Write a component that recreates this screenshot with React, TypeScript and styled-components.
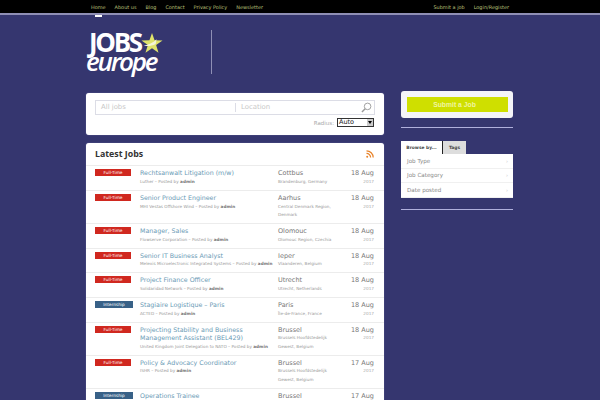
import React from "react"
import styled, { createGlobalStyle } from "styled-components"

const GlobalStyle = createGlobalStyle`
  html, body {
    margin: 0;
    background: #35366f;
    font-family: "DejaVu Sans", sans-serif;
  }
`

const Page = styled.div`
  height: 400px;
  overflow: hidden;
`

const TopBar = styled.div`
  height: 13px;
  background: #000;
  border-bottom: 2px solid #8f8fb5;
  display: flex;
  justify-content: space-between;
  padding: 0 91px;
  position: relative;
`

const NavList = styled.div`
  display: flex;
  gap: 9px;
  align-items: center;
  height: 13px;
  font-size: 4.95px;
  color: #bcc07a;
`

const ActiveMark = styled.div`
  position: absolute;
  left: 95px;
  top: 15px;
  width: 7px;
  height: 2px;
  background: #fff;
`

const Header = styled.div`
  height: 78px;
  padding-left: 86px;
  display: flex;
  box-sizing: border-box;
  padding-top: 16px;
`

const Logo = styled.div`
  width: 125px;
  height: 42px;
  position: relative;
  color: #fff;
  font-family: "Open Sans", sans-serif;
`

const LogoJobs = styled.div`
  font-size: 26px;
  font-weight: 700;
  height: 20px;
  line-height: 20px;
  letter-spacing: -2.3px;
  margin-left: 3px;
  margin-top: 1px;
`

const LogoEurope = styled.div`
  font-size: 26px;
  font-weight: 600;
  font-style: italic;
  height: 20px;
  line-height: 18px;
  letter-spacing: -2.2px;
`

const LogoStar = styled.svg`
  position: absolute;
  left: 55px;
  top: 1px;
  width: 22px;
  height: 22px;
`

const Divider = styled.div`
  width: 1px;
  height: 44px;
  margin-top: -1px;
  background: #8f8fb5;
`

const Columns = styled.div`
  display: flex;
  padding-left: 86px;
  gap: 17px;
  align-items: flex-start;
`

const MainColumn = styled.div`
  width: 298px;
  display: flex;
  flex-direction: column;
  gap: 8px;
`

const SideColumn = styled.div`
  width: 112px;
  margin-top: -2px;
  display: flex;
  flex-direction: column;
`

const SearchCard = styled.div`
  height: 42px;
  background: #fff;
  border-radius: 3px;
  box-shadow: 0 0 1px #9a9ac4;
  box-sizing: border-box;
  padding: 7px 9px;
`

const SearchBox = styled.div`
  height: 15px;
  border: 1px solid #dcdde6;
  box-sizing: border-box;
  display: flex;
  align-items: center;
  position: relative;
  font-size: 6.9px;
  color: #c8c8c8;
`

const SearchField = styled.div<{ $width: number }>`
  width: ${({ $width }) => $width}px;
  padding-left: 5px;
  box-sizing: border-box;
  line-height: 9px;
`

const FieldSplit = styled.div`
  width: 1px;
  height: 9px;
  background: #dcdde6;
`

const SearchIcon = styled.svg`
  position: absolute;
  right: 2px;
  top: 1px;
  width: 11px;
  height: 11px;
`

const RadiusRow = styled.div`
  display: flex;
  justify-content: flex-end;
  align-items: center;
  gap: 3px;
  margin-top: 3px;
  padding-right: 1px;
  font-size: 5.5px;
  color: #aaa;
`

const RadiusSelect = styled.div`
  width: 37px;
  height: 9px;
  box-sizing: border-box;
  border: 1px solid #333;
  color: #222;
  font-size: 6.5px;
  line-height: 7px;
  padding-left: 1px;
  position: relative;
`

const SelectArrow = styled.div`
  position: absolute;
  right: 0;
  top: 0;
  width: 6px;
  height: 7px;
  background: #ccc;
  display: flex;
  align-items: center;
  justify-content: center;
  &::after {
    content: "";
    border-left: 2px solid transparent;
    border-right: 2px solid transparent;
    border-top: 3px solid #000;
  }
`

const JobsCard = styled.div`
  background: #fff;
  border-radius: 3px 3px 0 0;
  box-shadow: 0 0 1px #9a9ac4;
`

const JobsHeader = styled.div`
  height: 22px;
  display: flex;
  justify-content: space-between;
  align-items: center;
  padding: 0 10px 0 9px;
`

const JobsTitle = styled.div`
  font-size: 8.8px;
  font-weight: bold;
  color: #333;
  font-family: "Open Sans", sans-serif;
`

const FeedIcon = styled.svg`
  width: 8px;
  height: 8px;
`

const Row = styled.div<{ $height: number }>`
  height: ${({ $height }) => $height}px;
  box-sizing: border-box;
  border-top: 1px solid #ececec;
  display: flex;
  padding: 3px 10px 0 9px;
`

const BadgeCell = styled.div`
  width: 45px;
  flex: none;
`

const Badge = styled.div<{ $kind: string }>`
  width: ${({ $kind }) => ($kind === "Internship" ? 38 : 36)}px;
  height: 7px;
  background: ${({ $kind }) => ($kind === "Internship" ? "#386187" : "#d0281f")};
  color: #fff;
  font-size: 4.3px;
  line-height: 7px;
  text-align: center;
`

const TitleCell = styled.div`
  width: 138px;
  flex: none;
  padding-right: 6px;
  box-sizing: border-box;
`

const JobName = styled.div`
  font-size: 6.3px;
  line-height: 8.7px;
  color: #6a9ab5;
`

const Small = styled.div`
  font-size: 4.2px;
  line-height: 8.3px;
  color: #999;
  white-space: nowrap;
  b {
    color: #777;
  }
`

const PlaceCell = styled.div`
  width: 62px;
  flex: none;
`

const City = styled.div`
  font-size: 6.5px;
  line-height: 8.7px;
  color: #777;
`

const DateCell = styled.div`
  flex: 1;
  text-align: right;
`

const YearText = styled(Small)`
  color: #aaa;
`

const SubmitCard = styled.div`
  height: 27px;
  box-sizing: border-box;
  background: #f4f4f8;
  border-radius: 3px;
  padding: 6px 5px 6px 6px;
`

const SubmitButton = styled.div`
  height: 15px;
  box-sizing: border-box;
  padding-right: 6px;
  background: #cfdf00;
  color: #f0f5a0;
  font-family: "Liberation Sans", sans-serif;
  font-weight: bold;
  font-size: 6.8px;
  line-height: 15px;
  text-align: center;
`

const Rule = styled.div<{ $gap: number }>`
  height: 1px;
  background: #b0b0dc;
  margin-top: ${({ $gap }) => $gap}px;
`

const Tabs = styled.div`
  display: flex;
  margin-top: 13px;
`

const Tab = styled.div<{ $active?: boolean }>`
  height: 13px;
  width: ${({ $active }) => ($active ? 41 : 24)}px;
  box-sizing: border-box;
  background: ${({ $active }) => ($active ? "#fff" : "#ddd")};
  border-left: ${({ $active }) => ($active ? "none" : "1px solid #222")};
  font-size: 4.4px;
  font-weight: bold;
  line-height: 13px;
  text-align: center;
  color: #444;
`

const CategoryList = styled.div`
  background: #fff;
`

const CategoryItem = styled.div`
  height: 14.67px;
  box-sizing: border-box;
  border-bottom: 1px solid #f0f0f0;
  display: flex;
  justify-content: space-between;
  align-items: center;
  padding: 0 5px 0 6px;
  font-size: 5.6px;
  color: #888;
`

const Chevron = styled.span`
  color: #ccc;
  font-size: 5px;
`

const jobs = [
  { kind: "Full-Time", title: "Rechtsanwalt Litigation (m/w)", org: "Luther", city: "Cottbus", region: "Brandenburg, Germany", date: "18 Aug", h: 25 },
  { kind: "Full-Time", title: "Senior Product Engineer", org: "MHI Vestas Offshore Wind", city: "Aarhus", region: "Central Denmark Region,", region2: "Denmark", date: "18 Aug", h: 33 },
  { kind: "Full-Time", title: "Manager, Sales", org: "Flowserve Corporation", city: "Olomouc", region: "Olomouc Region, Czechia", date: "18 Aug", h: 24.5 },
  { kind: "Full-Time", title: "Senior IT Business Analyst", org: "Melexis Microelectronic Integrated Systems", city: "Ieper", region: "Vlaanderen, Belgium", date: "18 Aug", h: 24.5 },
  { kind: "Full-Time", title: "Project Finance Officer", org: "Solidaridad Network", city: "Utrecht", region: "Utrecht, Netherlands", date: "18 Aug", h: 25 },
  { kind: "Internship", title: "Stagiaire Logistique – Paris", org: "ACTED", city: "Paris", region: "Île-de-France, France", date: "18 Aug", h: 24.5 },
  { kind: "Full-Time", title: "Projecting Stability and Business Management Assistant (BEL429)", org: "United Kingdom Joint Delegation to NATO", city: "Brussel", region: "Brussels Hoofdstedelijk", region2: "Gewest, Belgium", date: "18 Aug", h: 33 },
  { kind: "Full-Time", title: "Policy & Advocacy Coordinator", org: "ISHR", city: "Brussel", region: "Brussels Hoofdstedelijk", region2: "Gewest, Belgium", date: "17 Aug", h: 33.5 },
  { kind: "Internship", title: "Operations Trainee", org: "ACTED", city: "Brussel", region: "Brussels Hoofdstedelijk", region2: "Gewest, Belgium", date: "17 Aug", h: 33 },
]

export default function App() {
  return (
    <Page>
      <GlobalStyle />
      <TopBar>
        <NavList>
          <span>Home</span>
          <span>About us</span>
          <span>Blog</span>
          <span>Contact</span>
          <span>Privacy Policy</span>
          <span>Newsletter</span>
        </NavList>
        <NavList>
          <span>Submit a job</span>
          <span>Login/Register</span>
        </NavList>
        <ActiveMark />
      </TopBar>
      <Header>
        <Logo>
          <LogoJobs>JOBS</LogoJobs>
          <LogoEurope>europe</LogoEurope>
          <LogoStar viewBox="0 0 24 24">
            <path d="M12 1l2.8 8 8.7.2-7 5 2.6 8.3L12 17.6l-7.1 4.9 2.6-8.3-7-5 8.7-.2z" fill="#dfe36a" />
            <path d="M3 15c5-1 10-3 14-7l-1 5c-4 2-8 3-13 2z" fill="#f4f5d8" />
          </LogoStar>
        </Logo>
        <Divider />
      </Header>
      <Columns>
        <MainColumn>
          <SearchCard>
            <SearchBox>
              <SearchField $width={139}>All jobs</SearchField>
              <FieldSplit />
              <SearchField $width={130}>Location</SearchField>
              <SearchIcon viewBox="0 0 12 12" fill="none" stroke="#999">
                <circle cx="7.2" cy="4.8" r="3.6" />
                <path d="M4.6 7.4L1 11" strokeWidth="1.5" />
              </SearchIcon>
            </SearchBox>
            <RadiusRow>
              Radius:
              <RadiusSelect>
                Auto
                <SelectArrow />
              </RadiusSelect>
            </RadiusRow>
          </SearchCard>
          <JobsCard>
            <JobsHeader>
              <JobsTitle>Latest Jobs</JobsTitle>
              <FeedIcon viewBox="0 0 8 8" fill="none" stroke="#e8832a" strokeWidth="1.2">
                <circle cx="1.2" cy="6.8" r="1" fill="#e8832a" stroke="none" />
                <path d="M0.5 3.4a4 4 0 0 1 4.1 4.1M0.5 0.8a6.7 6.7 0 0 1 6.7 6.7" />
              </FeedIcon>
            </JobsHeader>
            {jobs.map((job) => (
              <Row key={job.title} $height={job.h}>
                <BadgeCell>
                  <Badge $kind={job.kind}>{job.kind}</Badge>
                </BadgeCell>
                <TitleCell>
                  <JobName>{job.title}</JobName>
                  <Small>
                    {job.org} – Posted by <b>admin</b>
                  </Small>
                </TitleCell>
                <PlaceCell>
                  <City>{job.city}</City>
                  <Small>{job.region}</Small>
                  {job.region2 && <Small>{job.region2}</Small>}
                </PlaceCell>
                <DateCell>
                  <City>{job.date}</City>
                  <YearText>2017</YearText>
                </DateCell>
              </Row>
            ))}
          </JobsCard>
        </MainColumn>
        <SideColumn>
          <SubmitCard>
            <SubmitButton>Submit a Job</SubmitButton>
          </SubmitCard>
          <Rule $gap={9} />
          <Tabs>
            <Tab $active>Browse by...</Tab>
            <Tab>Tags</Tab>
          </Tabs>
          <CategoryList>
            <CategoryItem>Job Type<Chevron>›</Chevron></CategoryItem>
            <CategoryItem>Job Category<Chevron>›</Chevron></CategoryItem>
            <CategoryItem>Date posted<Chevron>›</Chevron></CategoryItem>
          </CategoryList>
          <Rule $gap={11} />
        </SideColumn>
      </Columns>
    </Page>
  )
}
